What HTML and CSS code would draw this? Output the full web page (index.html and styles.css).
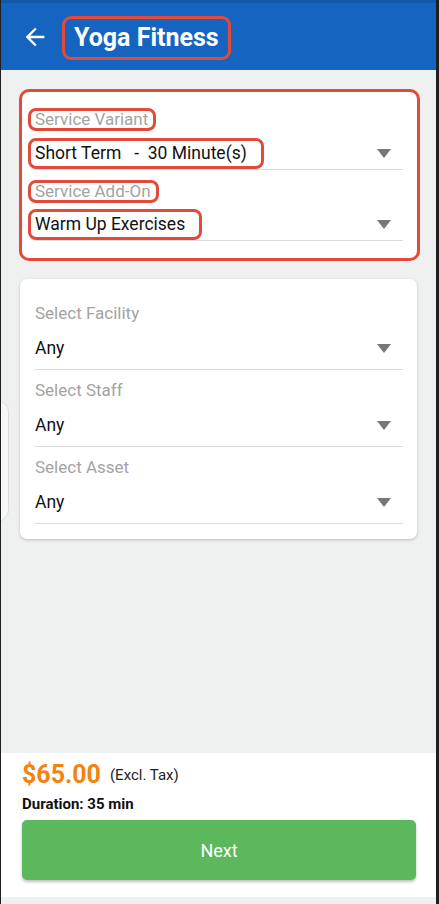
FILE: index.html
```html
<!DOCTYPE html>
<html>
<head>
<meta charset="utf-8">
<link rel="stylesheet" href="styles.css">
</head>
<body>
<div class="app">
  <header class="topbar">
    <svg class="back" viewBox="0 0 24 24" width="28" height="28"><path fill="#fff" d="M20 11H7.83l5.59-5.59L12 4l-8 8 8 8 1.41-1.41L7.83 13H20v-2z"/></svg>
    <h1 class="title">Yoga Fitness</h1>
  </header>
  <main class="content">
    <div class="peek"></div>
    <section class="card card-marked">
      <div class="mfield">
        <div class="mlabel"><span class="ann ann-label">Service Variant</span></div>
        <div class="mrow">
          <span class="ann ann-value">Short Term &nbsp;&nbsp;- &nbsp;30 Minute(s)</span>
          <span class="tri"></span>
        </div>
      </div>
      <div class="mfield mfield2">
        <div class="mlabel"><span class="ann ann-label">Service Add-On</span></div>
        <div class="mrow">
          <span class="ann ann-value">Warm Up Exercises</span>
          <span class="tri"></span>
        </div>
      </div>
    </section>
    <section class="card card-plain">
      <div class="field">
        <div class="label">Select Facility</div>
        <div class="row"><span class="value">Any</span><span class="tri"></span></div>
      </div>
      <div class="field">
        <div class="label">Select Staff</div>
        <div class="row"><span class="value">Any</span><span class="tri"></span></div>
      </div>
      <div class="field">
        <div class="label">Select Asset</div>
        <div class="row"><span class="value">Any</span><span class="tri"></span></div>
      </div>
    </section>
  </main>
  <footer class="footer">
    <div class="price-line"><span class="price">$65.00</span><span class="tax">(Excl. Tax)</span></div>
    <div class="duration">Duration: 35 min</div>
    <button class="next">Next</button>
  </footer>
  <div class="bottom-strip"></div>
</div>
</body>
</html>
```
FILE: styles.css
```css
* { box-sizing: border-box; }
html, body { margin: 0; padding: 0; }
body {
  background: #1f1f1f;
  font-family: Roboto, "Noto Sans", "Liberation Sans", sans-serif;
  width: 439px;
  height: 904px;
  overflow: hidden;
}
.app {
  margin-left: 1px;
  width: 435px;
  height: 904px;
  background: #eff0f0;
  display: flex;
  flex-direction: column;
  position: relative;
  overflow: hidden;
}
.topbar {
  height: 70px;
  flex: 0 0 70px;
  background: #1565c0;
  border-top: 3px solid #1259a9;
  display: flex;
  align-items: center;
  padding-left: 20px;
}
.back { display: block; flex: 0 0 28px; }
.title {
  margin: 3px 0 0 13px;
  color: #fff;
  font-size: 25px;
  font-weight: 700;
  line-height: 38px;
  height: 44px;
  border: 3px solid #e24b3b;
  border-radius: 9px;
  padding: 0 9px;
}
.content {
  flex: 1;
  position: relative;
  padding-top: 19px;
}
.peek {
  position: absolute;
  left: -21px;
  top: 330px;
  width: 29px;
  height: 122px;
  background: #f7f7f7;
  border: 1px solid #dcdcdc;
  border-radius: 12px;
}
.card {
  background: #fff;
}
.card-marked {
  margin-left: 18px;
  width: 401px;
  height: 172px;
  border: 3px solid #e24b3b;
  border-radius: 10px;
  padding: 16px 14px 0 13px;
}
.ann {
  display: inline-block;
  border: 3px solid #e24b3b;
  border-radius: 8px;
  margin-left: -7px;
  padding: 0 5px 0 4px;
  white-space: nowrap;
}
.ann-label {
  height: 23px;
  line-height: 17px;
  font-size: 17px;
  color: #a3a3a3;
}
.ann-value {
  height: 31px;
  line-height: 25px;
  font-size: 17.5px;
  color: #111;
  padding-right: 14px;
}
.mlabel { height: 23px; }
.mrow {
  margin-top: 7px;
  height: 32px;
  display: flex;
  align-items: flex-start;
  justify-content: space-between;
  border-bottom: 1px solid #dcdcdc;
}
.mrow .tri { margin-top: 11px; }
.mfield2 { margin-top: 10px; }
.mfield2 .mrow { margin-top: 6px; }
.tri {
  width: 0;
  height: 0;
  border-left: 7.5px solid transparent;
  border-right: 7.5px solid transparent;
  border-top: 9px solid #777;
  margin-right: 12px;
}
.card-plain {
  margin: 18px 0 0 19px;
  width: 397px;
  border-radius: 7px;
  box-shadow: 0 1px 3px rgba(0,0,0,0.22);
  padding: 24px 14px 15px 15px;
}
.field + .field { margin-top: 10px; }
.label {
  font-size: 17px;
  line-height: 20px;
  color: #a3a3a3;
}
.row {
  margin-top: 5px;
  height: 42px;
  display: flex;
  align-items: center;
  justify-content: space-between;
  border-bottom: 1px solid #dcdcdc;
  padding-bottom: 1px;
}
.value { font-size: 17.5px; color: #111; }
.footer {
  flex: 0 0 144px;
  height: 144px;
  background: #fff;
  padding: 8px 20px 0 21px;
}
.price-line {
  display: flex;
  align-items: center;
  height: 28px;
}
.price {
  color: #f5820d;
  font-size: 25px;
  font-weight: 700;
  line-height: 28px;
}
.tax {
  font-size: 15px;
  line-height: 18px;
  color: #222;
  margin-left: 9px;
}
.duration {
  margin-top: 6px;
  font-size: 15px;
  font-weight: 700;
  color: #111;
  line-height: 18px;
}
.next {
  display: block;
  margin-top: 7px;
  width: 394px;
  height: 60px;
  background: #5cb85c;
  border: none;
  border-radius: 5px;
  color: #fff;
  font-family: Roboto, "Noto Sans", sans-serif;
  font-size: 18px;
  box-shadow: 0 2px 3px rgba(0,0,0,0.25);
}
.bottom-strip {
  flex: 0 0 7px;
  background: #eff0f0;
}
```
